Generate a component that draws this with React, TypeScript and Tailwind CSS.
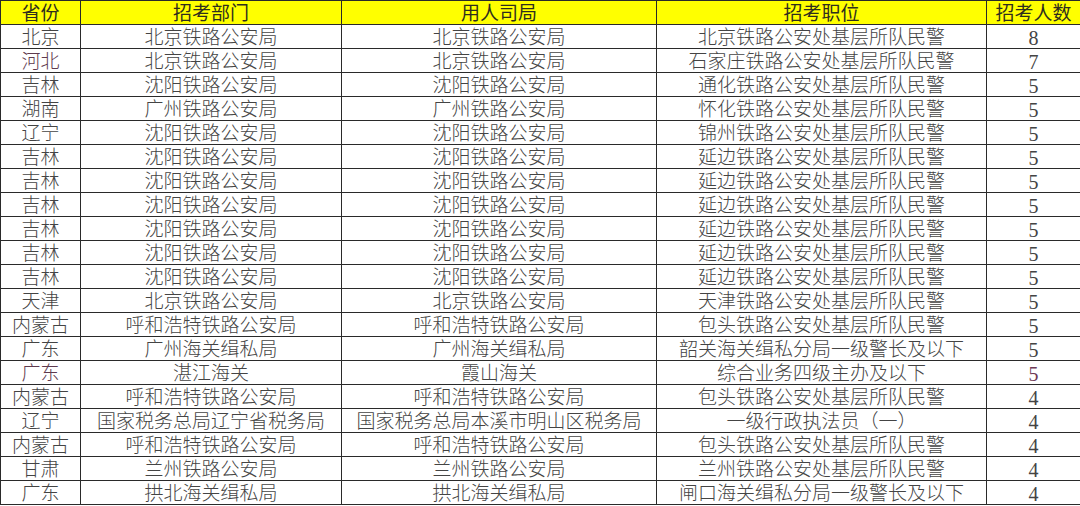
import React from 'react';

type Row = {
  province: string;
  dept: string;
  bureau: string;
  post: string;
  count: number;
  tint?: boolean;
};

const headers = ['省份', '招考部门', '用人司局', '招考职位', '招考人数'];

const yanbian: Row = {
  province: '吉林',
  dept: '沈阳铁路公安局',
  bureau: '沈阳铁路公安局',
  post: '延边铁路公安处基层所队民警',
  count: 5,
};

const rows: Row[] = [
  { province: '北京', dept: '北京铁路公安局', bureau: '北京铁路公安局', post: '北京铁路公安处基层所队民警', count: 8 },
  { province: '河北', dept: '北京铁路公安局', bureau: '北京铁路公安局', post: '石家庄铁路公安处基层所队民警', count: 7, tint: true },
  { province: '吉林', dept: '沈阳铁路公安局', bureau: '沈阳铁路公安局', post: '通化铁路公安处基层所队民警', count: 5 },
  { province: '湖南', dept: '广州铁路公安局', bureau: '广州铁路公安局', post: '怀化铁路公安处基层所队民警', count: 5 },
  { province: '辽宁', dept: '沈阳铁路公安局', bureau: '沈阳铁路公安局', post: '锦州铁路公安处基层所队民警', count: 5 },
  yanbian,
  yanbian,
  yanbian,
  yanbian,
  yanbian,
  yanbian,
  { province: '天津', dept: '北京铁路公安局', bureau: '北京铁路公安局', post: '天津铁路公安处基层所队民警', count: 5 },
  { province: '内蒙古', dept: '呼和浩特铁路公安局', bureau: '呼和浩特铁路公安局', post: '包头铁路公安处基层所队民警', count: 5 },
  { province: '广东', dept: '广州海关缉私局', bureau: '广州海关缉私局', post: '韶关海关缉私分局一级警长及以下', count: 5 },
  { province: '广东', dept: '湛江海关', bureau: '霞山海关', post: '综合业务四级主办及以下', count: 5, tint: true },
  { province: '内蒙古', dept: '呼和浩特铁路公安局', bureau: '呼和浩特铁路公安局', post: '包头铁路公安处基层所队民警', count: 4 },
  { province: '辽宁', dept: '国家税务总局辽宁省税务局', bureau: '国家税务总局本溪市明山区税务局', post: '一级行政执法员（一）', count: 4 },
  { province: '内蒙古', dept: '呼和浩特铁路公安局', bureau: '呼和浩特铁路公安局', post: '包头铁路公安处基层所队民警', count: 4 },
  { province: '甘肃', dept: '兰州铁路公安局', bureau: '兰州铁路公安局', post: '兰州铁路公安处基层所队民警', count: 4 },
  { province: '广东', dept: '拱北海关缉私局', bureau: '拱北海关缉私局', post: '闸口海关缉私分局一级警长及以下', count: 4 },
];

const cell = 'border border-[#2a2a2a] p-0 pt-[2px] text-center align-middle whitespace-nowrap';

const App = () => {
  return (
    <div
      className="w-[1080px] h-[506px] overflow-hidden bg-white text-[19px] leading-none font-light text-[#444444]"
      style={{ fontFamily: '"Liberation Serif", "Noto Sans CJK SC", serif' }}
    >
      <table className="w-[1080px] table-fixed border-collapse">
        <colgroup>
          <col className="w-[80px]" />
          <col className="w-[261px]" />
          <col className="w-[315px]" />
          <col className="w-[330px]" />
          <col className="w-[94px]" />
        </colgroup>
        <thead>
          <tr className="h-[24px] bg-[#ffff00] text-[#2e2e1e]">
            {headers.map((h) => (
              <th key={h} className={`${cell} font-normal`}>
                {h}
              </th>
            ))}
          </tr>
        </thead>
        <tbody>
          {rows.map((r, i) => (
            <tr key={i} className="h-[24px]">
              <td className={`${cell} ${r.tint ? 'text-[#5e3a4e]' : ''}`}>{r.province}</td>
              <td className={cell}>{r.dept}</td>
              <td className={cell}>{r.bureau}</td>
              <td className={cell}>{r.post}</td>
              <td className={`${cell} text-[20px] ${r.tint && r.count === 5 ? 'text-[#6e3a56]' : ''}`}>{r.count}</td>
            </tr>
          ))}
        </tbody>
      </table>
    </div>
  );
};

export default App;
